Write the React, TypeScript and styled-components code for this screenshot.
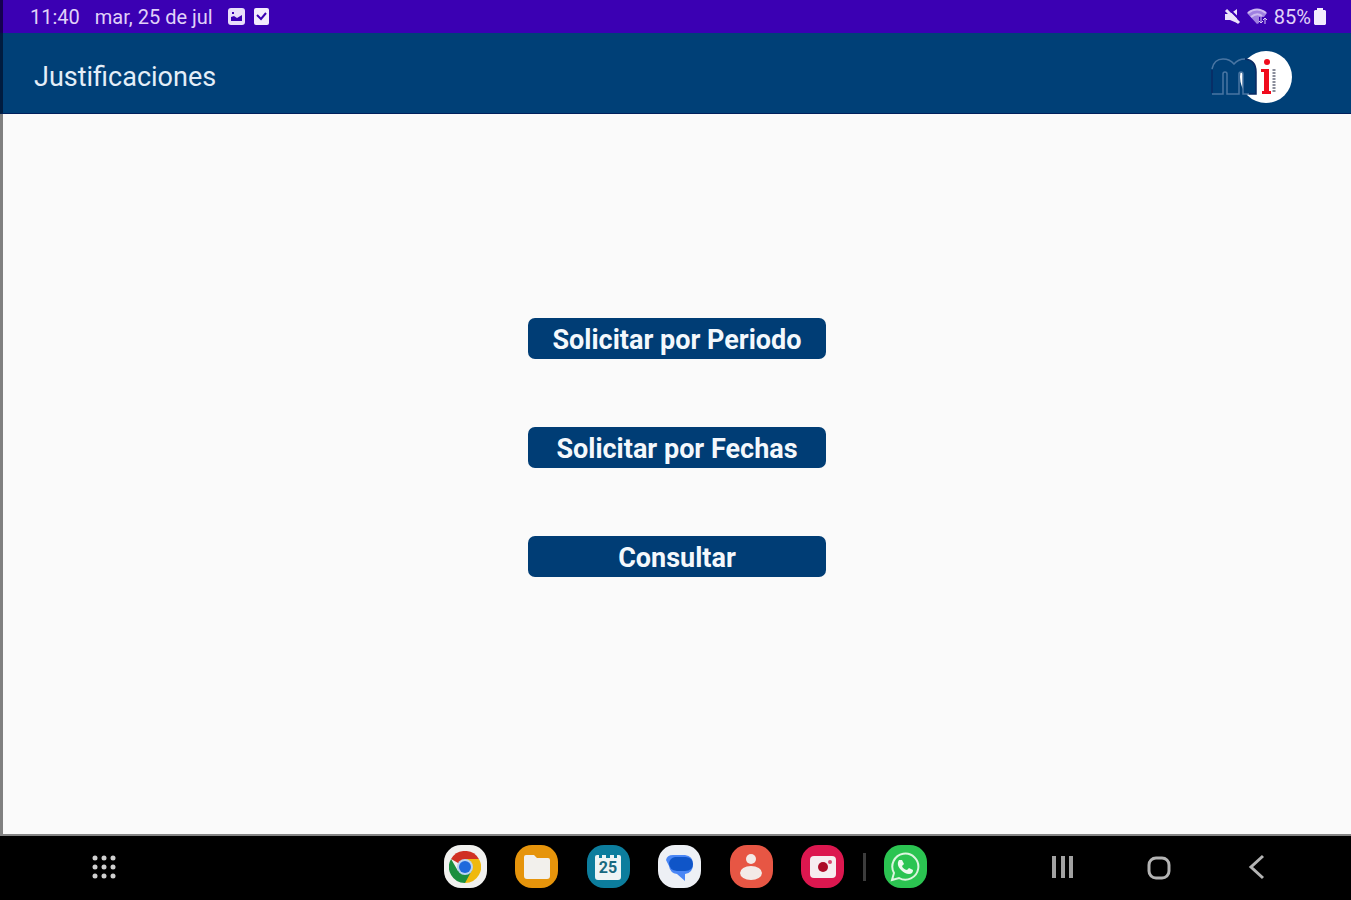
import React from 'react';
import styled, { createGlobalStyle } from 'styled-components';

const GlobalStyle = createGlobalStyle`
  * { box-sizing: border-box; }
  body { margin: 0; background: #fafafa; font-family: Roboto, "Liberation Sans", sans-serif; }
  button { font: inherit; border: 0; padding: 0; cursor: pointer; }
  svg { display: block; }
`;

const Screen = styled.div`
  min-height: 100vh;
  display: flex;
  flex-direction: column;
`;

const StatusBar = styled.div`
  height: 33px;
  padding: 0 25px 0 27px;
  border-left: 3px solid #150050;
  background: #3b00b3;
  color: #e0d2f8;
  display: flex;
  align-items: center;
  justify-content: space-between;
  font-size: 20px;
  line-height: 24px;
`;

const StatusGroup = styled.div<{ $gap: number }>`
  display: flex;
  align-items: center;
  gap: ${(p) => p.$gap}px;
`;

const AppBar = styled.header`
  height: 81px;
  padding: 8px 56px 0 31px;
  border-left: 3px solid #001c40;
  border-bottom: 1px solid #00205c;
  background: #004077;
  display: flex;
  align-items: center;
  justify-content: space-between;
`;

const Title = styled.h1`
  margin: 0;
  color: #e4eef8;
  font-size: 27px;
  line-height: 32px;
  font-weight: 400;
`;

const Content = styled.main`
  flex: 1;
  border-left: 3px solid #808080;
  border-bottom: 2px solid #848484;
  padding-bottom: 54px;
  background: #fafafa;
  display: flex;
  flex-direction: column;
  align-items: center;
  justify-content: center;
  gap: 68px;
`;

const ActionButton = styled.button`
  width: 298px;
  height: 41px;
  border-radius: 7px;
  background: #003d75;
  color: #f4f8fc;
  && { font-size: 27px; line-height: 32px; font-weight: 700; padding-top: 3px; }
`;

const NavBar = styled.nav`
  height: 64px;
  padding: 0 85px 3px 90px;
  background: #000;
  display: grid;
  grid-template-columns: 1fr auto 1fr;
  align-items: center;
`;

const Dock = styled.div`
  margin-left: 14px;
  display: flex;
  align-items: center;
  gap: 18px;
`;

const DockApps = styled.div`
  width: 401px;
  display: flex;
  justify-content: space-between;
`;

const Divider = styled.span`
  width: 3px;
  height: 28px;
  background: #3c3c3c;
`;

const AppIcon = styled.button<{ $color: string }>`
  width: 43px;
  height: 43px;
  border-radius: 17px;
  background: ${(p) => p.$color};
  display: grid;
  place-items: center;
`;

const IconButton = styled.button`
  background: none;
  justify-self: start;
`;

const SystemKeys = styled.div`
  justify-self: end;
  display: flex;
  align-items: center;
  gap: 72px;
`;

const Logo = () => (
  <svg width="86" height="56" viewBox="0 0 86 56" role="img" aria-label="mi">
    <circle cx="57" cy="28" r="26" fill="#fff" />
    <path
      d="M3 45V20Q5 10 14 10Q21 10 25 15Q29 10 36 10Q47 11 47 23V45H34V25Q34 23 32 23Q30 23 30 25V45H18V25Q18 23 16 23Q14 23 14 25V45Z"
      fill="#003f76"
    />
    <path
      d="M3 20Q5 10 14 10Q21 10 25 15Q29 10 36 10M3 45H14V25Q14 23 16 23Q18 23 18 25V45H30V25Q30 23 32 23Q34 23 34 25V45H40"
      fill="none"
      stroke="#4a76a3"
      strokeWidth="1.5"
    />
    <path d="M3 21V44M36 10Q47 11 47 23V45H40" fill="none" stroke="#0a2a63" strokeWidth="1.5" />
    <path d="M52 20H60V42H62V45H53V42H55V23H52Z" fill="#f00b1d" />
    <circle cx="58" cy="13" r="3" fill="#f00b1d" />
    <path d="M65 20V44" stroke="#8a8d9b" strokeWidth="3" strokeDasharray="2 1" />
  </svg>
);

const App = () => (
  <>
    <GlobalStyle />
    <Screen>
      <StatusBar>
        <StatusGroup $gap={15}>
          <span>11:40</span>
          <span>mar, 25 de jul</span>
          <StatusGroup $gap={8}>
            <svg width="17" height="17" viewBox="0 0 17 17">
              <rect width="17" height="17" rx="3" fill="#e9defa" />
              <path d="M3 13V9L6 8L9 10L14 7V13Z" fill="#3b00b3" />
              <path d="M4 4H6V6H4Z" fill="#3b00b3" />
            </svg>
            <svg width="17" height="17" viewBox="0 0 17 17">
              <rect x="1" width="15" height="17" rx="2" fill="#f3ecfd" />
              <path d="M4 7L8 11L13 5" fill="none" stroke="#3b00b3" strokeWidth="2" />
            </svg>
          </StatusGroup>
        </StatusGroup>
        <StatusGroup $gap={6}>
          <svg width="17" height="17" viewBox="0 0 17 17">
            <path d="M1 6H6L13 1V15L6 12H1Z" fill="#ece3fb" />
            <path d="M5 1L17 13" stroke="#3b00b3" strokeWidth="2" />
            <path d="M2 2L15 15" stroke="#ece3fb" strokeWidth="3" />
          </svg>
          <svg width="21" height="17" viewBox="0 0 21 17">
            <path d="M0 5Q10 -3 20 5L17 9H12V15L10 16Z" fill="#9f80e0" />
            <path d="M1 5Q10 -2 19 5M4 9Q10 4 15 8" fill="none" stroke="#cdb9f1" strokeWidth="2" />
            <path d="M14 9V15M12 13L14 15L16 13M18 16V10M16 12L18 10L20 12" fill="none" stroke="#d8c8f4" strokeWidth="1" />
          </svg>
          <StatusGroup $gap={3}>
            <span>85%</span>
            <svg width="12" height="17" viewBox="0 0 12 17">
              <path d="M3 0H9V2H11L12 3V16L11 17H1L0 16V3L1 2H3Z" fill="#f3ecfd" />
            </svg>
          </StatusGroup>
        </StatusGroup>
      </StatusBar>
      <AppBar>
        <Title>Justificaciones</Title>
        <Logo />
      </AppBar>
      <Content>
        <ActionButton type="button">Solicitar por Periodo</ActionButton>
        <ActionButton type="button">Solicitar por Fechas</ActionButton>
        <ActionButton type="button">Consultar</ActionButton>
      </Content>
      <NavBar>
        <IconButton type="button" aria-label="Aplicaciones">
          <svg width="28" height="28" viewBox="0 0 28 28" fill="#d0d0d0">
            {[5, 14, 23].map((y) => [5, 14, 23].map((x) => <circle key={`${x}-${y}`} cx={x} cy={y} r="2.5" />))}
          </svg>
        </IconButton>
        <Dock>
          <DockApps>
            <AppIcon type="button" $color="#f1f1ef" aria-label="Chrome">
              <svg width="32" height="32" viewBox="0 0 32 32">
                <path d="M16 16L2.1 8A16 16 0 0 1 29.9 8Z" fill="#d03022" />
                <path d="M16 16L29.9 8A16 16 0 0 1 16 32Z" fill="#efb90e" />
                <path d="M2.1 8A16 16 0 0 0 16 32L22.5 20L16 16L9 20Z" fill="#1b8f3f" />
                <path d="M16 8H29.9L22.9 20Z" fill="#efb90e" />
                <circle cx="16" cy="16" r="8" fill="#b9d3f3" />
                <circle cx="16" cy="16" r="6" fill="#1e69dc" />
              </svg>
            </AppIcon>
            <AppIcon type="button" $color="#e6940b" aria-label="Mis archivos">
              <svg width="28" height="26" viewBox="0 0 28 26">
                <path d="M1 3Q1 1 3 1H11L14 4H25Q27 4 27 6V22Q27 25 24 25H4Q1 25 1 22Z" fill="#f2f0ec" />
              </svg>
            </AppIcon>
            <AppIcon type="button" $color="#0c7d9d" aria-label="Calendario">
              <svg width="26" height="28" viewBox="0 0 26 28">
                <path d="M0 4Q0 2 2 2H4V5H7V2H11V5H15V2H19V5H22V2H24Q26 2 26 4V24Q26 27 23 27H3Q0 27 0 24Z" fill="#edf4f5" />
                <text x="13" y="20" textAnchor="middle" fontSize="16" fontWeight="700" fill="#17697f">25</text>
              </svg>
            </AppIcon>
            <AppIcon type="button" $color="#edf0f5" aria-label="Mensajes">
              <svg width="30" height="30" viewBox="0 0 30 30">
                <path d="M1 8Q2 3 8 3H20Q28 4 28 12Q28 21 20 22V29L12 22Q5 21 4 14Z" fill="#4a86f5" />
                <path d="M10 5H21Q28 6 28 12Q28 19 20 19H12Q4 18 4 11Q5 6 10 5Z" fill="#0f55c8" />
              </svg>
            </AppIcon>
            <AppIcon type="button" $color="#e75644" aria-label="Contactos">
              <svg width="24" height="28" viewBox="0 0 24 28" fill="#f3eae7">
                <circle cx="12" cy="6" r="5" />
                <ellipse cx="12" cy="20" rx="11" ry="7" />
              </svg>
            </AppIcon>
            <AppIcon type="button" $color="#dc174f" aria-label="Cámara">
              <svg width="26" height="22" viewBox="0 0 26 22">
                <rect width="26" height="22" rx="4" fill="#f6edf0" />
                <circle cx="13" cy="11" r="5" fill="#ac0c28" />
                <circle cx="20" cy="6" r="2" fill="#d94970" />
              </svg>
            </AppIcon>
          </DockApps>
          <Divider />
          <AppIcon type="button" $color="#2bc451" aria-label="WhatsApp">
            <svg width="30" height="30" viewBox="0 0 30 30">
              <path d="M2 28L4 21A13 13 0 1 1 9 26Z" fill="none" stroke="#dcf5df" strokeWidth="2" />
              <path d="M9 8L12 8L14 12L12 14Q13 17 17 18L19 16L23 18Q23 22 19 22Q15 22 11 18Q7 14 8 10Z" fill="#edf9ee" />
            </svg>
          </AppIcon>
        </Dock>
        <SystemKeys>
          <IconButton type="button" aria-label="Recientes">
            <svg width="24" height="24" viewBox="0 0 24 24" fill="#a2a2a2">
              <rect x="2" y="1" width="4" height="22" />
              <rect x="11" y="1" width="4" height="22" />
              <rect x="19" y="1" width="4" height="22" />
            </svg>
          </IconButton>
          <IconButton type="button" aria-label="Inicio">
            <svg width="26" height="26" viewBox="0 0 26 26">
              <rect x="3" y="4" width="20" height="20" rx="7" fill="none" stroke="#b4b4b4" strokeWidth="3" />
            </svg>
          </IconButton>
          <IconButton type="button" aria-label="Atrás">
            <svg width="22" height="26" viewBox="0 0 22 26">
              <path d="M19 2L7 13L19 24" fill="none" stroke="#b4b4b4" strokeWidth="3" />
            </svg>
          </IconButton>
        </SystemKeys>
      </NavBar>
    </Screen>
  </>
);

export default App;
